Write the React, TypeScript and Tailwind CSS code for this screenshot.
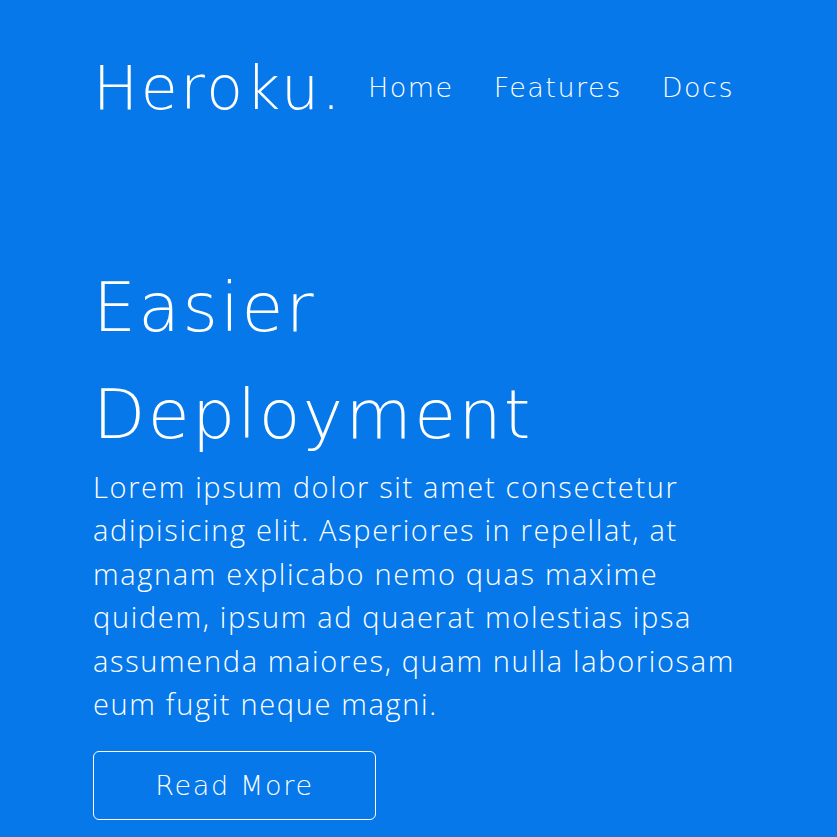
export default function App() {
  const links = ["Home", "Features", "Docs"];

  return (
    <div className="min-h-[837px] bg-[#0678e9] text-white font-['DejaVu_Sans',sans-serif] font-extralight">
      <div className="ml-[93px] w-[652px]">
        {/* Header */}
        <header className="flex items-center justify-between pt-[48px] h-[128px]">
          <a className="text-[60px] leading-none tracking-[2.6px]">Heroku.</a>
          <nav className="flex gap-[40px] mr-[11px]">
            {links.map((l) => (
              <a key={l} className="text-[27px] tracking-[1.5px]">
                {l}
              </a>
            ))}
          </nav>
        </header>

        {/* Hero */}
        <section className="pt-[126px]">
          <h1 className="text-[68px] leading-[107px] tracking-[2.4px]">
            Easier
            <br />
            Deployment
          </h1>
          <p className="mt-[-3px] text-[29px] leading-[43.4px] tracking-[1.65px] font-['Open_Sans',sans-serif] font-light">
            Lorem ipsum dolor sit amet consectetur adipisicing elit. Asperiores in
            repellat, at magnam explicabo nemo quas maxime quidem, ipsum ad quaerat
            molestias ipsa assumenda maiores, quam nulla laboriosam eum fugit neque
            magni.
          </p>
          <button className="mt-[26px] w-[283px] h-[69px] border border-white rounded-[6px] text-[27px] tracking-[1.7px]">
            Read More
          </button>
        </section>
      </div>
    </div>
  );
}
